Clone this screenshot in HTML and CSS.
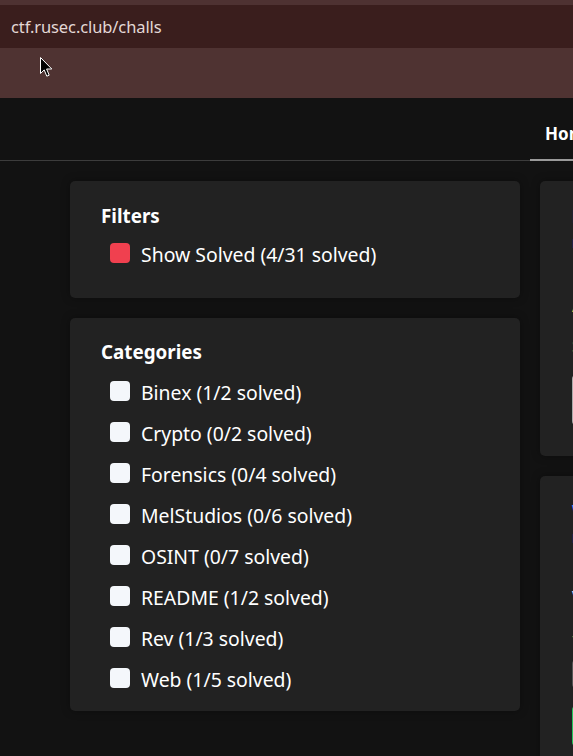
FILE: index.html
```html
<!DOCTYPE html>
<html>
<head>
<meta charset="utf-8">
<link rel="stylesheet" href="styles.css">
</head>
<body>
<div class="chrome">
  <div class="chrome-top"></div>
  <div class="urlbar"><span class="url">ctf.rusec.club/challs</span></div>
  <div class="chrome-bottom"></div>
  <svg class="cursor" width="13" height="21" viewBox="0 0 13 21"><path d="M0.5 0.5 L0.5 16.5 L4.2 12.9 L6.8 19.2 L9.2 18.2 L6.6 12 L11.8 12 Z" fill="#000" stroke="#fff" stroke-width="1"/></svg>
</div>
<div class="page">
  <nav class="nav">
    <div class="nav-spacer"></div>
    <a class="tab active">Home</a>
  </nav>
  <main class="main">
    <div class="col-left">
      <section class="card filters">
        <h3 class="card-title">Filters</h3>
        <ul class="list">
          <li class="item"><span class="box checked"></span><span>Show Solved (4/31 solved)</span></li>
        </ul>
      </section>
      <section class="card categories">
        <h3 class="card-title">Categories</h3>
        <ul class="list cats">
          <li class="item"><span class="box"></span><span>Binex (1/2 solved)</span></li>
          <li class="item"><span class="box"></span><span>Crypto (0/2 solved)</span></li>
          <li class="item"><span class="box"></span><span>Forensics (0/4 solved)</span></li>
          <li class="item"><span class="box"></span><span>MelStudios (0/6 solved)</span></li>
          <li class="item"><span class="box"></span><span>OSINT (0/7 solved)</span></li>
          <li class="item"><span class="box"></span><span>README (1/2 solved)</span></li>
          <li class="item"><span class="box"></span><span>Rev (1/3 solved)</span></li>
          <li class="item"><span class="box"></span><span>Web (1/5 solved)</span></li>
        </ul>
      </section>
    </div>
    <div class="col-right">
      <section class="card chall c1">
        <div class="ch-title">Binex</div>
        <div class="ch-sub">misc</div>
        <div class="ch-line a">Author</div>
        <div class="ch-line s">Solves</div>
        <div class="ch-input"></div>
      </section>
      <section class="card chall c2">
        <div class="ch-title">Web</div>
        <div class="ch-sub">misc</div>
        <div class="ch-line v">View</div>
        <div class="ch-line t">—</div>
        <div class="ch-input small"></div>
        <div class="ch-green"></div>
      </section>
    </div>
  </main>
</div>
</body>
</html>
```
FILE: styles.css
```css
* { box-sizing: border-box; }
html, body { margin: 0; padding: 0; }
body {
  width: 573px;
  height: 756px;
  overflow: hidden;
  background: #121212;
  font-family: "Noto Sans", "Open Sans", sans-serif;
  color: #fff;
}
.chrome { position: relative; }
.chrome-top { height: 5px; background: #4e3232; }
.urlbar {
  height: 43px;
  background: #3a1e1d;
  display: flex;
  align-items: center;
  padding-left: 11px;
}
.url {
  font-family: "Noto Sans", sans-serif;
  font-size: 16.5px;
  color: #e3d8d6;
  letter-spacing: -0.1px;
}
.chrome-bottom { height: 50px; background: #4f3332; }
.cursor { position: absolute; left: 40px; top: 57px; }

.page { background: #121212; }
.nav {
  height: 63px;
  display: flex;
  border-bottom: 1px solid #3c3c3c;
}
.nav-spacer { flex: 0 0 530px; }
.tab {
  flex: 0 0 auto;
  padding: 0 15px;
  display: flex;
  align-items: center;
  font-weight: 700;
  font-size: 17px;
  color: #fff;
  padding-top: 10px;
  border-bottom: 2px solid #9a9a9a;
  margin-bottom: -1px;
  white-space: nowrap;
}
.main {
  display: flex;
  gap: 20px;
  padding: 20px 0 0 70px;
}
.col-left, .col-right {
  display: flex;
  flex-direction: column;
  gap: 20px;
}
.col-left { flex: 0 0 450px; }
.col-right { flex: 0 0 400px; }
.card {
  background: #222222;
  border-radius: 5px;
  box-shadow: 0 0 8px rgba(0,0,0,0.35);
}
.filters { height: 117px; padding: 22px 31px 0; }
.categories { height: 393px; padding: 21px 31px 0; }
.card-title {
  margin: 0;
  font-size: 18.8px;
  line-height: 26px;
  font-weight: 700;
}
.list { list-style: none; margin: 0; padding: 0 0 0 9px; }
.filters .list { margin-top: 12px; }
.cats { margin-top: 14px; display: flex; flex-direction: column; gap: 17px; }
.item {
  display: flex;
  align-items: center;
  gap: 11px;
  height: 24px;
  font-size: 19.4px;
  color: #fff;
  white-space: nowrap;
}
.item span:last-child { position: relative; top: 1px; }
.box {
  width: 20px;
  height: 20px;
  border-radius: 4px;
  background: #f4f7fb;
  flex: 0 0 20px;
}
.box.checked { background: #f0404f; }

.chall { padding: 24px 32px; position: relative; }
.c1 { height: 275px; }
.c2 { height: 300px; }
.ch-title { font-weight: 700; font-size: 18px; color: #3d8bfd; line-height: 22px; }
.ch-sub { font-size: 16px; color: #3d8bfd; margin-top: 4px; }
.ch-line { font-size: 16px; color: #f0c040; }
.ch-line.a { margin-top: 42px; }
.ch-line.s { margin-top: 18px; }
.ch-line.v { margin-top: 38px; color: #dde6ff; }
.ch-line.t { margin-top: 16px; }
.ch-input {
  margin-top: 18px;
  height: 50px;
  border: 2px solid #aaa;
  border-radius: 4px;
}
.ch-input.small { height: 28px; border-color: #555; margin-top: 14px; }
.ch-green { margin-top: 18px; height: 40px; border: 2px solid #22c55e; border-radius: 4px; }
```
